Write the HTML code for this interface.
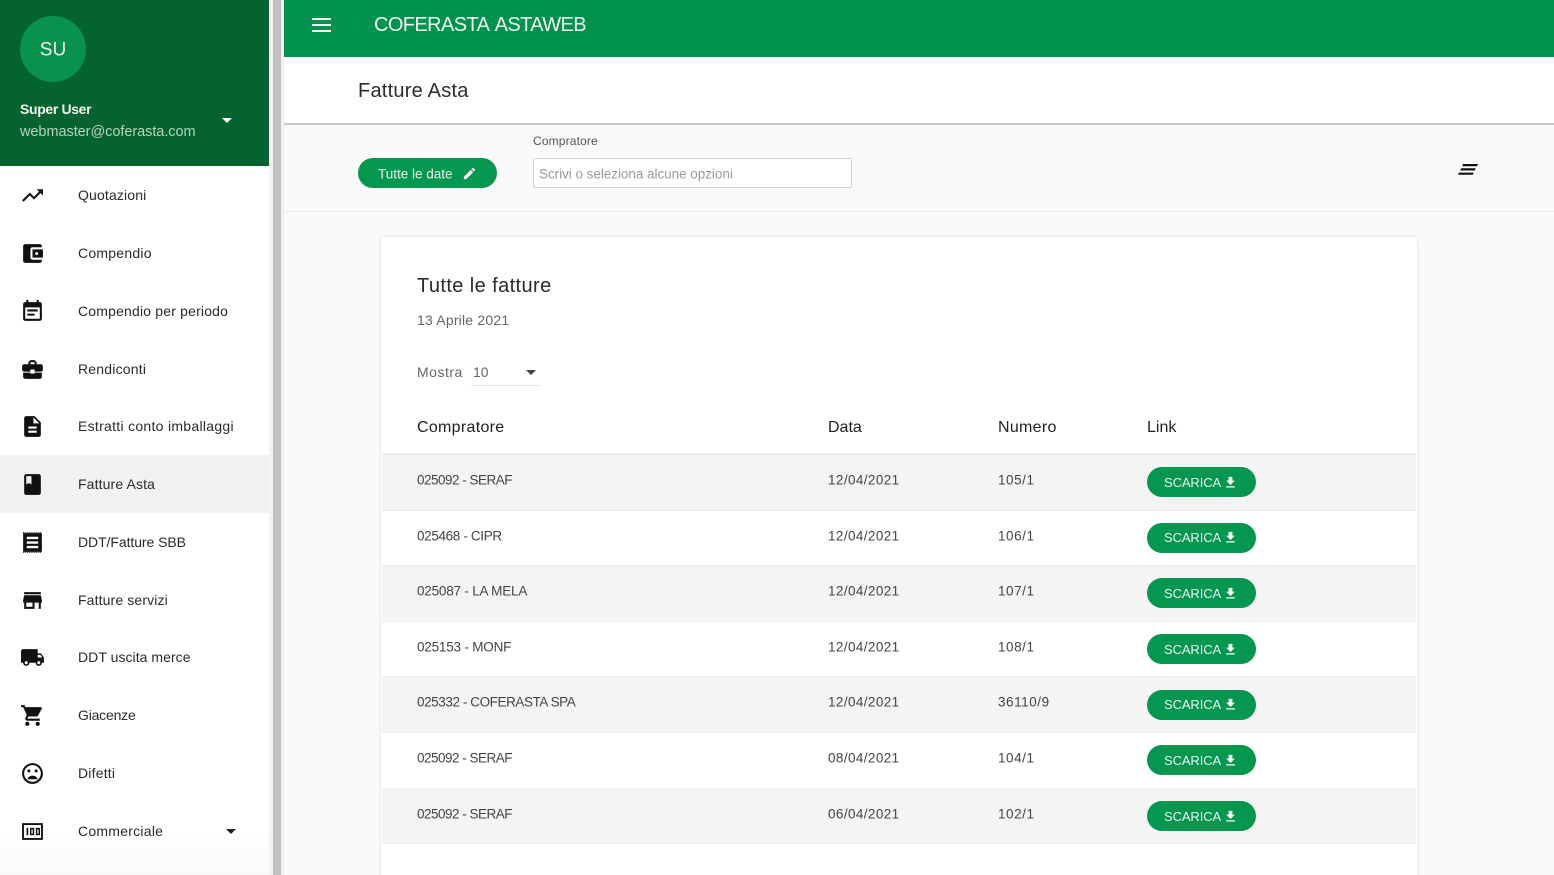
<!DOCTYPE html>
<html lang="it"><head><meta charset="utf-8"><title>Fatture Asta</title>
<style>
html,body{margin:0;padding:0;width:1554px;height:875px;overflow:hidden;background:#fafafa;font-family:"Liberation Sans",sans-serif;color:#222}
#w{position:relative;width:1554px;height:875px;overflow:hidden}
.a{position:absolute}
.t{position:absolute;white-space:nowrap;transform:translateY(-50%);line-height:1}
.m{font-size:14px;color:#2b2b2b}
.c{font-size:13.5px;color:#444}
.d{letter-spacing:.4px}
.n{letter-spacing:.55px}
.h{font-size:16px;color:#222}
.i{position:absolute;left:20px;width:25px;height:25px;fill:#111}
.r{position:absolute;left:382px;width:1034px;height:55px;border-bottom:1px solid #ececec}
.g{background:#f4f4f4}
.b{position:absolute;left:1147px;width:109px;height:30px;border-radius:15px;background:#05964f;color:#e8f5ee}
.b span{position:absolute;left:17px;top:8.5px;font-size:13px;line-height:14px;letter-spacing:-.1px}
.b svg{position:absolute;left:76px;top:7.5px;width:15px;height:15px;fill:#fff}
</style></head><body><div id="w">

<div class="a" style="left:0;top:0;width:269px;height:875px;background:linear-gradient(#fff 0,#fff 830px,#fafafa 875px)"></div>
<div class="a" style="left:0;top:0;width:269px;height:166px;background:#05632f"></div>
<div class="a" style="left:20px;top:16px;width:66px;height:66px;border-radius:50%;background:#08924e"></div>
<div class="t" style="left:20px;width:66px;text-align:center;top:49.5px;font-size:19px;color:#eef8f2">SU</div>
<div class="t" style="left:20px;top:109px;font-size:14px;font-weight:bold;color:#f2f7f4;letter-spacing:-.35px">Super User</div>
<div class="t" style="left:20px;top:132px;font-size:14.5px;color:#b5d2c1;letter-spacing:-.05px">webmaster@coferasta.com</div>
<div class="a" style="left:222px;top:118px;border:5px solid transparent;border-top-color:#fff;border-bottom:0"></div>

<div class="a" style="left:0;top:455px;width:269px;height:58px;background:#f1f1f1"></div>

<svg class="i" style="top:183px" viewBox="0 0 24 24"><path d="M16 6l2.29 2.29-4.88 4.88-4-4L2 16.59 3.41 18l6-6 4 4 6.3-6.29L22 12V6z"/></svg>
<svg class="i" style="top:241px" viewBox="0 0 24 24"><path d="M21 18v1c0 1.1-.9 2-2 2H5c-1.11 0-2-.9-2-2V5c0-1.1.89-2 2-2h14c1.1 0 2 .9 2 2v1h-9c-1.11 0-2 .9-2 2v8c0 1.1.89 2 2 2h9zm-9-2h10V8H12v8zm4-2.5c-.83 0-1.5-.67-1.5-1.5s.67-1.5 1.5-1.5 1.5.67 1.5 1.5-.67 1.5-1.5 1.5z"/></svg>
<svg class="i" style="top:299px" viewBox="0 0 24 24"><path d="M17 10H7v2h10v-2zm2-7h-1V1h-2v2H8V1H6v2H5c-1.11 0-1.99.9-1.99 2L3 19c0 1.1.89 2 2 2h14c1.1 0 2-.9 2-2V5c0-1.1-.9-2-2-2zm0 16H5V8h14v11zm-5-5H7v2h7v-2z"/></svg>
<svg class="i" style="top:357px" viewBox="0 0 24 24"><path d="M10 16v-1H3.01L3 19c0 1.11.89 2 2 2h14c1.11 0 2-.89 2-2v-4h-7v1h-4zm10-9h-4.01V5l-2-2h-4l-2 2v2H4c-1.1 0-2 .9-2 2v3c0 1.11.89 2 2 2h6v-2h4v2h6c1.1 0 2-.9 2-2V9c0-1.1-.9-2-2-2zm-6 0h-4V5h4v2z"/></svg>
<svg class="i" style="top:414px" viewBox="0 0 24 24"><path d="M14 2H6c-1.1 0-1.99.9-1.99 2L4 20c0 1.1.89 2 1.99 2H18c1.1 0 2-.9 2-2V8l-6-6zm2 16H8v-2h8v2zm0-4H8v-2h8v2zm-3-5V3.5L18.5 9H13z"/></svg>
<svg class="i" style="top:472px" viewBox="0 0 24 24"><path d="M18 2H6c-1.1 0-2 .9-2 2v16c0 1.1.9 2 2 2h12c1.1 0 2-.9 2-2V4c0-1.1-.9-2-2-2zM6 4h5v8l-2.5-1.5L6 12V4z"/></svg>
<svg class="i" style="top:530px" viewBox="0 0 24 24"><path fill-rule="evenodd" d="M3 3h18v18H3zM6.500 6.500v2.300h11V6.500zM6.500 10.900v2.300h11v-2.300zM6.500 15.200v2.300h11v-2.300z"/><path d="M3 2.500h18M3 21.500h18" stroke="#111" stroke-width="1" stroke-dasharray="1 1" fill="none"/></svg>
<svg class="i" style="top:588px" viewBox="0 0 24 24"><path d="M20 4H4v2h16V4zm1 10v-2l-1-5H4l-1 5v2h1v6h10v-6h4v6h2v-6h1zm-9 4H6v-4h6v4z"/></svg>
<svg class="i" style="top:645px" viewBox="0 0 24 24"><path d="M20 8h-3V4H3c-1.1 0-2 .9-2 2v11h2c0 1.66 1.34 3 3 3s3-1.34 3-3h6c0 1.66 1.34 3 3 3s3-1.34 3-3h2v-5l-3-4zM6 18.5c-.83 0-1.5-.67-1.5-1.5s.67-1.5 1.5-1.5 1.5.67 1.5 1.5-.67 1.5-1.5 1.5zm13.5-9l1.96 2.5H17V9.5h2.5zm-1.5 9c-.83 0-1.5-.67-1.5-1.5s.67-1.5 1.5-1.5 1.5.67 1.5 1.5-.67 1.5-1.5 1.5z"/></svg>
<svg class="i" style="top:703px" viewBox="0 0 24 24"><path d="M7 18c-1.1 0-1.99.9-1.99 2S5.9 22 7 22s2-.9 2-2-.9-2-2-2zM1 2v2h2l3.6 7.59-1.35 2.45c-.16.28-.25.61-.25.96 0 1.1.9 2 2 2h12v-2H7.42c-.14 0-.25-.11-.25-.25l.03-.12.9-1.63h7.45c.75 0 1.41-.41 1.75-1.03l3.58-6.49c.08-.14.12-.31.12-.48 0-.55-.45-1-1-1H5.21l-.94-2H1zm16 16c-1.1 0-1.99.9-1.99 2s.89 2 1.99 2 2-.9 2-2-.9-2-2-2z"/></svg>
<svg class="i" style="top:761px" viewBox="0 0 24 24"><circle cx="15.5" cy="9.5" r="1.5"/><circle cx="8.5" cy="9.5" r="1.5"/><path d="M11.99 2C6.47 2 2 6.48 2 12s4.47 10 9.99 10C17.52 22 22 17.52 22 12S17.52 2 11.99 2zM12 20c-4.42 0-8-3.58-8-8s3.58-8 8-8 8 3.58 8 8-3.58 8-8 8zM12 14c-2.33 0-4.31 1.46-5.11 3.5h10.22c-.8-2.04-2.78-3.5-5.11-3.5z"/></svg>
<svg class="i" style="top:819px" viewBox="0 0 24 24"><path fill-rule="evenodd" d="M2 4h20v16H2zM3.800 5.800v12.400h16.400V5.800z"/><path d="M6.300 8.500h1.600v7H6.300z"/><path fill-rule="evenodd" d="M9.600 8.500h4v7h-4zM11 9.900v4.200h1.200V9.900zM15.200 8.500h4v7h-4zM16.600 9.900v4.200h1.200V9.900z"/></svg>

<div class="t m" style="left:78px;top:195px;letter-spacing:.15px">Quotazioni</div>
<div class="t m" style="left:78px;top:253px;letter-spacing:.24px">Compendio</div>
<div class="t m" style="left:78px;top:310.5px;letter-spacing:.18px">Compendio per periodo</div>
<div class="t m" style="left:78px;top:368.5px;letter-spacing:.2px">Rendiconti</div>
<div class="t m" style="left:78px;top:426px;letter-spacing:.29px">Estratti conto imballaggi</div>
<div class="t m" style="left:78px;top:484px;letter-spacing:.13px">Fatture Asta</div>
<div class="t m" style="left:78px;top:541.5px;letter-spacing:-.07px">DDT/Fatture SBB</div>
<div class="t m" style="left:78px;top:599.5px;letter-spacing:.13px">Fatture servizi</div>
<div class="t m" style="left:78px;top:657px;letter-spacing:.05px">DDT uscita merce</div>
<div class="t m" style="left:78px;top:715px;letter-spacing:-.2px">Giacenze</div>
<div class="t m" style="left:78px;top:772.5px;letter-spacing:.2px">Difetti</div>
<div class="t m" style="left:78px;top:830.5px;letter-spacing:.25px">Commerciale</div>
<div class="a" style="left:226px;top:829px;border:5px solid transparent;border-top-color:#222;border-bottom:0"></div>

<div class="a" style="left:269px;top:0;width:4px;height:875px;background:#f3f3f3"></div>
<div class="a" style="left:273px;top:0;width:8px;height:875px;background:#c1c1c1"></div>
<div class="a" style="left:281px;top:0;width:3px;height:875px;background:#f0f0f0"></div>

<div class="a" style="left:284px;top:0;width:1270px;height:57px;background:#01934d"></div>
<div class="a" style="left:312px;top:17.5px;width:19px;height:2px;background:#f2f9f5"></div>
<div class="a" style="left:312px;top:23.5px;width:19px;height:2px;background:#f2f9f5"></div>
<div class="a" style="left:312px;top:29.5px;width:19px;height:2px;background:#f2f9f5"></div>
<div class="t" style="left:374px;top:25px;font-size:20px;color:#f0f8f4;letter-spacing:-.6px;word-spacing:2.5px">COFERASTA ASTAWEB</div>

<div class="a" style="left:284px;top:57px;width:1270px;height:66px;background:#fff;border-bottom:2px solid #c9c9c9"></div>
<div class="t" style="left:358px;top:91px;font-size:20px;color:#2c2c2c;letter-spacing:.23px">Fatture Asta</div>

<div class="a" style="left:284px;top:125px;width:1270px;height:86px;background:#fafafa;border-bottom:1px solid #ebebeb"></div>
<div class="a" style="left:358px;top:158px;width:139px;height:30px;border-radius:15px;background:#05964f"></div>
<div class="t" style="left:378px;top:173.5px;font-size:13.5px;color:#e8f5ee;letter-spacing:0">Tutte le date</div>
<svg class="a" style="left:462px;top:166px;width:15px;height:15px;fill:#fff" viewBox="0 0 24 24"><path d="M3 17.25V21h3.75L17.81 9.94l-3.75-3.75L3 17.25zM20.71 7.04c.39-.39.39-1.02 0-1.41l-2.34-2.34c-.39-.39-1.02-.39-1.41 0l-1.83 1.83 3.75 3.75 1.83-1.83z"/></svg>
<div class="t" style="left:533px;top:140.5px;font-size:12px;color:#555;letter-spacing:.15px">Compratore</div>
<div class="a" style="left:533px;top:158px;width:317px;height:28px;background:#fff;border:1px solid #d2d2d2;border-radius:2px"></div>
<div class="t" style="left:539px;top:173.5px;font-size:13.5px;color:#9b9b9b;letter-spacing:-.04px">Scrivi o seleziona alcune opzioni</div>
<svg class="a" style="left:1458px;top:164px;width:20px;height:12px" viewBox="0 0 20 12"><path d="M5.200 0h14.800l-1 2.200H4.200zM3.200 4.300h14.500l-1 2.200H2.200zM1 8.600h14.700l-.8 2.200H0z" fill="#111"/></svg>

<div class="a" style="left:381px;top:237px;width:1036px;height:650px;background:#fff;box-shadow:0 0 3px rgba(0,0,0,.13)"></div>
<div class="t" style="left:417px;top:286px;font-size:20px;color:#2a2a2a;letter-spacing:.4px">Tutte le fatture</div>
<div class="t" style="left:417px;top:320px;font-size:14px;color:#666;letter-spacing:.2px">13 Aprile 2021</div>
<div class="t" style="left:417px;top:372px;font-size:14px;color:#666;letter-spacing:.5px">Mostra</div>
<div class="t" style="left:473px;top:372px;font-size:14px;color:#666">10</div>
<div class="a" style="left:526px;top:370px;border:5px solid transparent;border-top-color:#444;border-bottom:0"></div>
<div class="a" style="left:471px;top:385px;width:69px;height:1px;background:#e2e2e2"></div>

<div class="t h" style="left:417px;top:427.5px;letter-spacing:.3px">Compratore</div>
<div class="t h" style="left:828px;top:427.5px">Data</div>
<div class="t h" style="left:998px;top:427.5px;letter-spacing:.3px">Numero</div>
<div class="t h" style="left:1147px;top:427.5px">Link</div>
<div class="a" style="left:382px;top:453px;width:1034px;height:2px;background:#eaeaea"></div>

<div class="r g" style="top:455px"></div>
<div class="r" style="top:510px"></div>
<div class="r g" style="top:566px"></div>
<div class="r" style="top:621px"></div>
<div class="r g" style="top:677px"></div>
<div class="r" style="top:733px"></div>
<div class="r g" style="top:788px"></div>

<div class="t c" style="left:417px;top:480px;letter-spacing:-.5px">025092 - SERAF</div><div class="t c d" style="left:828px;top:480px">12/04/2021</div><div class="t c n" style="left:998px;top:480px">105/1</div>
<div class="t c" style="left:417px;top:535.5px;letter-spacing:-.35px">025468 - CIPR</div><div class="t c d" style="left:828px;top:535.5px">12/04/2021</div><div class="t c n" style="left:998px;top:535.5px">106/1</div>
<div class="t c" style="left:417px;top:590.5px;letter-spacing:-.2px">025087 - LA MELA</div><div class="t c d" style="left:828px;top:590.5px">12/04/2021</div><div class="t c n" style="left:998px;top:590.5px">107/1</div>
<div class="t c" style="left:417px;top:646.5px;letter-spacing:-.2px">025153 - MONF</div><div class="t c d" style="left:828px;top:646.5px">12/04/2021</div><div class="t c n" style="left:998px;top:646.5px">108/1</div>
<div class="t c" style="left:417px;top:702px;letter-spacing:-.42px">025332 - COFERASTA SPA</div><div class="t c d" style="left:828px;top:702px">12/04/2021</div><div class="t c n" style="left:998px;top:702px">36110/9</div>
<div class="t c" style="left:417px;top:758px;letter-spacing:-.5px">025092 - SERAF</div><div class="t c d" style="left:828px;top:758px">08/04/2021</div><div class="t c n" style="left:998px;top:758px">104/1</div>
<div class="t c" style="left:417px;top:813.5px;letter-spacing:-.5px">025092 - SERAF</div><div class="t c d" style="left:828px;top:813.5px">06/04/2021</div><div class="t c n" style="left:998px;top:813.5px">102/1</div>

<div class="b" style="top:467px"><span>SCARICA</span><svg viewBox="0 0 24 24"><path d="M19 9h-4V3H9v6H5l7 7 7-7zM5 18v2h14v-2H5z"/></svg></div>
<div class="b" style="top:522.5px"><span>SCARICA</span><svg viewBox="0 0 24 24"><path d="M19 9h-4V3H9v6H5l7 7 7-7zM5 18v2h14v-2H5z"/></svg></div>
<div class="b" style="top:578px"><span>SCARICA</span><svg viewBox="0 0 24 24"><path d="M19 9h-4V3H9v6H5l7 7 7-7zM5 18v2h14v-2H5z"/></svg></div>
<div class="b" style="top:634px"><span>SCARICA</span><svg viewBox="0 0 24 24"><path d="M19 9h-4V3H9v6H5l7 7 7-7zM5 18v2h14v-2H5z"/></svg></div>
<div class="b" style="top:689.5px"><span>SCARICA</span><svg viewBox="0 0 24 24"><path d="M19 9h-4V3H9v6H5l7 7 7-7zM5 18v2h14v-2H5z"/></svg></div>
<div class="b" style="top:745px"><span>SCARICA</span><svg viewBox="0 0 24 24"><path d="M19 9h-4V3H9v6H5l7 7 7-7zM5 18v2h14v-2H5z"/></svg></div>
<div class="b" style="top:801px"><span>SCARICA</span><svg viewBox="0 0 24 24"><path d="M19 9h-4V3H9v6H5l7 7 7-7zM5 18v2h14v-2H5z"/></svg></div>

</div></body></html>
